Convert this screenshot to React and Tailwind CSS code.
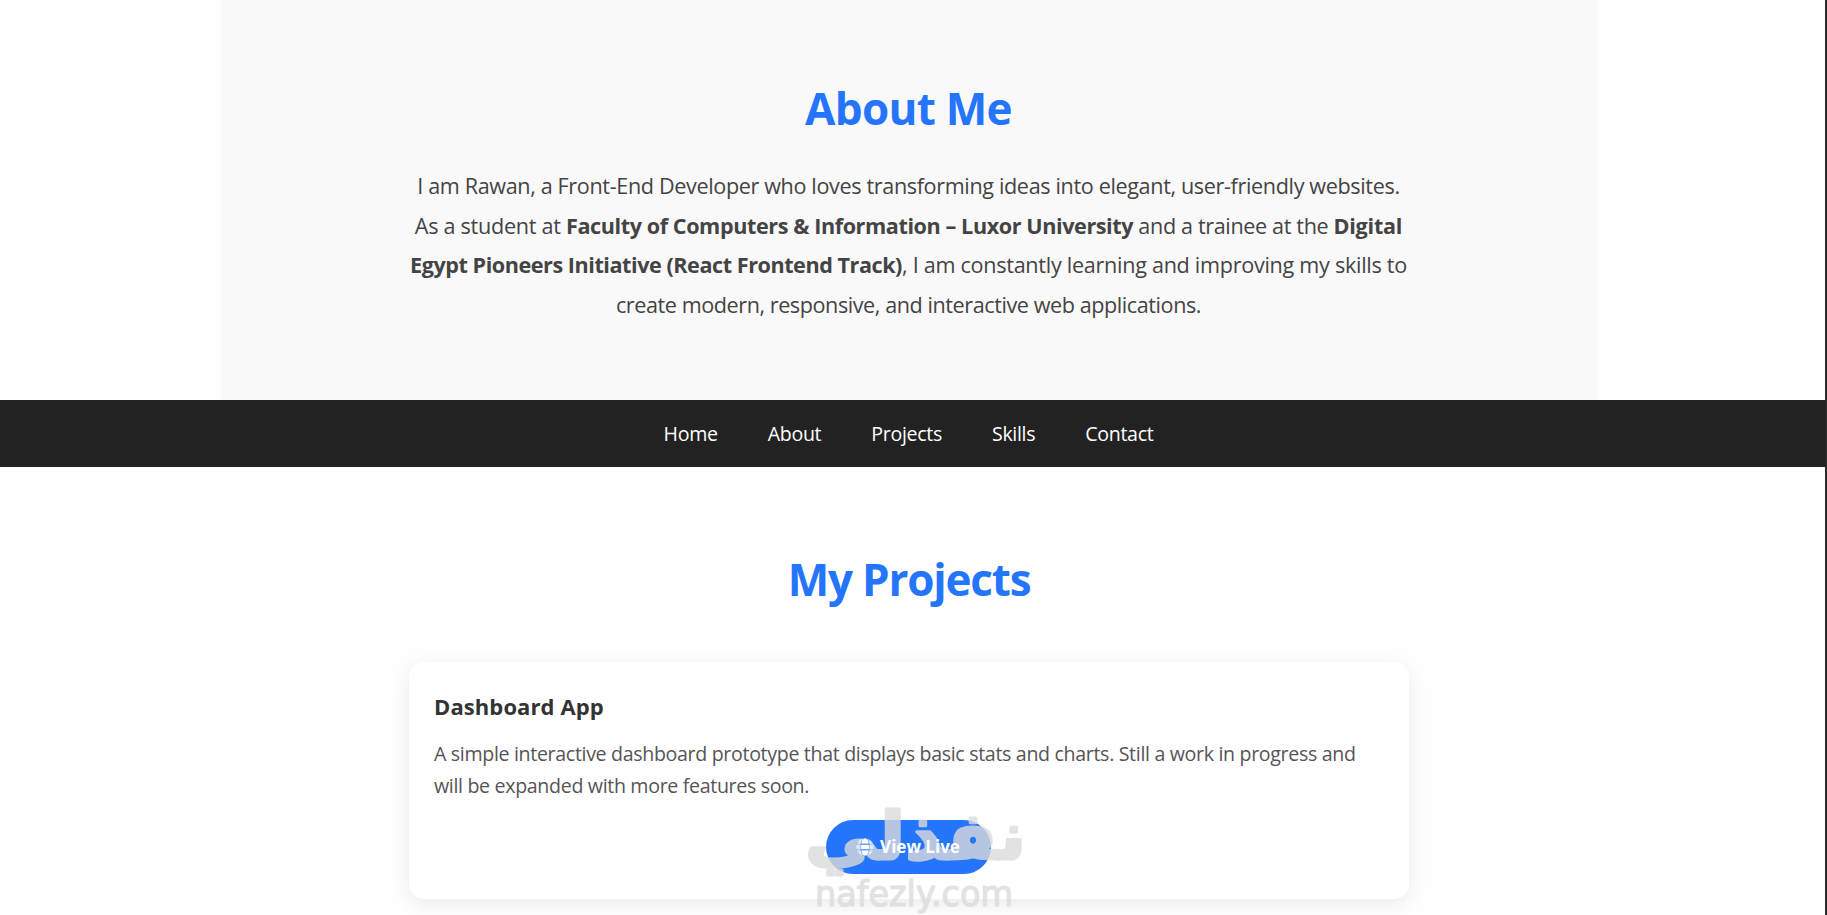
import React from "react";

const links = ["Home", "About", "Projects", "Skills", "Contact"];

const GlobeIcon = () => (
  <svg viewBox="0 0 18 18" className="relative z-10 h-[18px] w-[18px]" fill="none">
    <circle cx="9" cy="9" r="8.8" fill="white" fillOpacity="0.6" />
    <ellipse cx="9" cy="9" rx="4" ry="8.8" fill="white" />
    <g stroke="#2575fc" strokeWidth="1">
      <ellipse cx="9" cy="9" rx="4.4" ry="9.2" strokeOpacity="0.4" />
      <path d="M5 6.2h8M5 11.8h8" />
      <path d="M0 6.2h5M13 6.2h5M0 11.8h5M13 11.8h5" strokeOpacity="0.4" />
    </g>
  </svg>
);

const About = () => (
  <section className="mx-auto h-[400px] w-[1376px] bg-[#f9f9f9] pt-[78px] text-center">
    <h2 className="text-[44px] leading-[60px] font-bold tracking-[-0.7px] text-[#2575fc]">
      About Me
    </h2>
    <p className="mt-[28px] text-[21.6px] leading-[39.7px] whitespace-nowrap text-[#444]">
      <span className="tracking-[-0.36px]">
        I am Rawan, a Front-End Developer who loves transforming ideas into elegant, user-friendly websites.
      </span>
      <br />
      <span className="tracking-[-0.28px]">As a student at </span>
      <strong className="tracking-[-0.41px]">
        Faculty of Computers &amp; Information – Luxor University
      </strong>
      <span className="tracking-[-0.36px]"> and a trainee at the </span>
      <strong className="tracking-[-0.25px]">Digital</strong>
      <br />
      <strong className="tracking-[-0.45px]">
        Egypt Pioneers Initiative (React Frontend Track)
      </strong>
      <span className="tracking-[-0.28px]">
        , I am constantly learning and improving my skills to
      </span>
      <br />
      <span className="tracking-[-0.43px]">
        create modern, responsive, and interactive web applications.
      </span>
    </p>
  </section>
);

const Navbar = () => (
  <nav className="flex h-[67px] items-center justify-center gap-[50px] bg-[#222] pr-[8px] text-[19.6px] tracking-[-0.32px] text-white">
    {links.map((link) => (
      <a key={link} href={"#" + link.toLowerCase()}>
        {link}
      </a>
    ))}
  </nav>
);

// translucent site mark laid over the button
const Watermark = () => (
  <svg
    className="pointer-events-none absolute top-[129px] left-[385px] h-[140px] w-[245px] overflow-visible"
    viewBox="-10 -10 245 140"
    fill="#dbdbdb"
    stroke="#dbdbdb"
    strokeLinejoin="round"
    opacity="0.8"
  >
    <text
      x="222"
      y="58"
      direction="rtl"
      textLength="221"
      lengthAdjust="spacingAndGlyphs"
      strokeWidth="3"
      className="font-['DejaVu_Sans',sans-serif] text-[66px] font-bold"
    >
      نفذلي
    </text>
    <text
      x="11"
      y="105"
      textLength="198"
      lengthAdjust="spacingAndGlyphs"
      strokeWidth="1.2"
      className="font-['DejaVu_Sans',sans-serif] text-[36px]"
    >
      nafezly.com
    </text>
  </svg>
);

const ProjectCard = () => (
  <div className="relative mx-auto mt-[51px] h-[237px] w-[1000px] rounded-[15px] bg-white px-[25px] pt-[28px] shadow-[0_5px_20px_rgba(0,0,0,0.08)]">
    <h3 className="text-[22px] leading-[32px] font-bold tracking-[0.1px] text-[#333]">
      Dashboard App
    </h3>
    <p className="mt-[16px] text-[19.6px] leading-[32px] tracking-[-0.33px] text-[#555]">
      A simple interactive dashboard prototype that displays basic stats and charts. Still a work in progress and
      will be expanded with more features soon.
    </p>
    <button className="relative right-px mx-auto mt-[18px] flex h-[54px] w-[165px] items-center justify-center gap-[6px] rounded-full bg-[#2575fc] text-[17px] font-bold text-white">
      <GlobeIcon />
      <span className="relative z-10">View Live</span>
    </button>
    <Watermark />
  </div>
);

export default function App() {
  return (
    <div className="flex h-[915px] overflow-hidden bg-[#fefefe] font-['Open_Sans','Noto_Sans',sans-serif]">
      <main className="flex-1">
        <div className="pr-[8px]">
          <About />
        </div>
        <Navbar />
        <section className="pt-[80px] pr-[7px]">
          <h2 className="text-center text-[44px] leading-[64px] font-bold tracking-[-1.2px] text-[#2575fc]">
            My Projects
          </h2>
          <ProjectCard />
        </section>
      </main>
      <div className="w-[2px] bg-[#2b2b2b]" />
    </div>
  );
}
